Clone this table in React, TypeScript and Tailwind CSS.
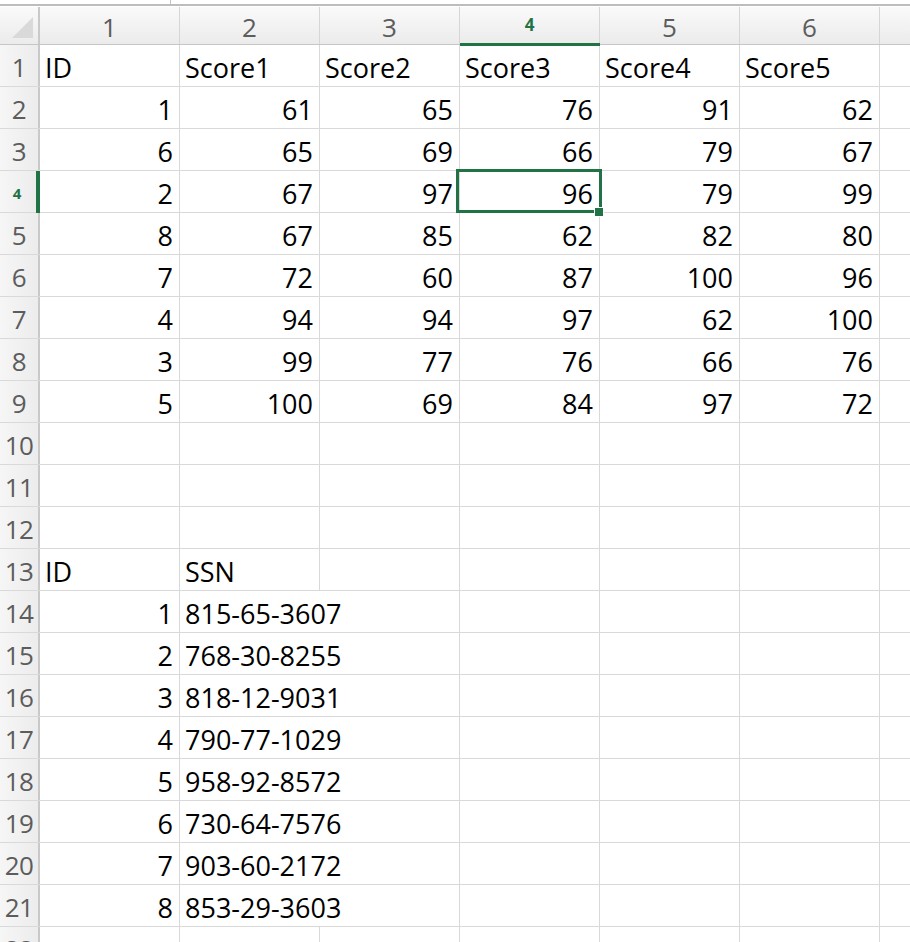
import React from "react";

const data: (string | number)[][] = [
  ["ID", "Score1", "Score2", "Score3", "Score4", "Score5"],
  [1, 61, 65, 76, 91, 62],
  [6, 65, 69, 66, 79, 67],
  [2, 67, 97, 96, 79, 99],
  [8, 67, 85, 62, 82, 80],
  [7, 72, 60, 87, 100, 96],
  [4, 94, 94, 97, 62, 100],
  [3, 99, 77, 76, 66, 76],
  [5, 100, 69, 84, 97, 72],
  [],
  [],
  [],
  ["ID", "SSN"],
  [1, "815-65-3607"],
  [2, "768-30-8255"],
  [3, "818-12-9031"],
  [4, "790-77-1029"],
  [5, "958-92-8572"],
  [6, "730-64-7576"],
  [7, "903-60-2172"],
  [8, "853-29-3603"],
  [],
];

const font = { fontFamily: '"Open Sans", "Liberation Sans", sans-serif' };

export default function App() {
  return (
    <div className="w-[910px] h-[942px] overflow-hidden bg-white relative" style={font}>
      {/* top strip */}
      <div className="h-[4px] flex">
        <div className="w-[170px] h-full" />
        <div className="w-px h-full bg-[#c4c4c4]" />
      </div>
      <div className="h-[2px] bg-[#bdbdbd]" />
      <div className="h-px bg-white" />
      {/* column header */}
      <div className="flex h-[38px] bg-gradient-to-b from-[#fafafa] to-[#ebebeb] border-b border-[#c6c6c6]">
        <div className="w-[40px] shrink-0 h-full border-r-2 border-[#c9c9c9] relative">
          <svg className="absolute left-0 top-0" width="38" height="37">
            <polygon points="12,31 33,10 33,31" fill="#d9d9d9" />
          </svg>
        </div>
        {[1, 2, 3, 4, 5, 6].map((n) => (
          <div
            key={n}
            className={
              n === 4
                ? "w-[140px] shrink-0 h-full border-r border-[#d6d6d6] flex items-center justify-center relative"
                : "w-[140px] shrink-0 h-full border-r border-[#d6d6d6] flex items-center justify-center text-[26px] text-[#5c5c5c] pt-[3px]"
            }
          >
            {n === 4 ? (
              <>
                <span className="text-[17px] font-bold text-[#217346] pb-[2px]">4</span>
                <div className="absolute left-0 right-[-1px] bottom-[-2px] h-[3px] bg-[#217346]" />
              </>
            ) : (
              n
            )}
          </div>
        ))}
        <div className="flex-1" />
      </div>
      {/* rows */}
      {data.map((row, r) => {
        const rn = r + 1;
        const sel = rn === 4;
        const ssnRow = rn >= 14 && rn <= 21;
        return (
          <div key={r} className="flex h-[42px] border-b border-[#d9d9d9]">
            <div
              className={
                sel
                  ? "w-[40px] shrink-0 h-full bg-gradient-to-r from-[#f6f6f6] to-[#ececec] border-r-2 border-[#c9c9c9] relative flex items-center justify-center"
                  : "w-[40px] shrink-0 h-full bg-gradient-to-r from-[#f6f6f6] to-[#ececec] border-r-2 border-[#c9c9c9] flex items-center justify-center text-[26px] text-[#5c5c5c] tracking-[-0.5px] pt-[3px]"
              }
            >
              {sel ? (
                <>
                  <span className="text-[15px] font-bold text-[#217346] pr-[4px] pt-[4px]">4</span>
                  <div className="absolute right-[-2px] top-0 bottom-[-1px] w-[4px] bg-[#217346]" />
                </>
              ) : (
                rn
              )}
            </div>
            {[0, 1, 2, 3, 4, 5].map((c) => {
              const v = row[c];
              const isNum = typeof v === "number";
              const noRight = ssnRow && c === 1;
              return (
                <div
                  key={c}
                  className={
                    (noRight ? "border-r border-transparent " : "border-r border-[#d9d9d9] ") +
                    "w-[140px] shrink-0 h-full flex items-end pb-[3px] text-[27px] text-black leading-none whitespace-nowrap overflow-visible " +
                    (isNum ? "justify-end pr-[6px]" : "justify-start pl-[5px]") +
                    (c === 1 && ssnRow ? " relative z-10" : "")
                  }
                >
                  {v !== undefined ? <span className="leading-[30px]">{v}</span> : null}
                </div>
              );
            })}
            <div className="flex-1" />
          </div>
        );
      })}
      {/* selection box */}
      <div className="absolute left-[456px] top-[169px] w-[146px] h-[44px] border-[3px] border-[#217346] pointer-events-none" />
      <div className="absolute left-[594px] top-[207px] w-[10px] h-[10px] bg-[#217346] border border-white" />
    </div>
  );
}
